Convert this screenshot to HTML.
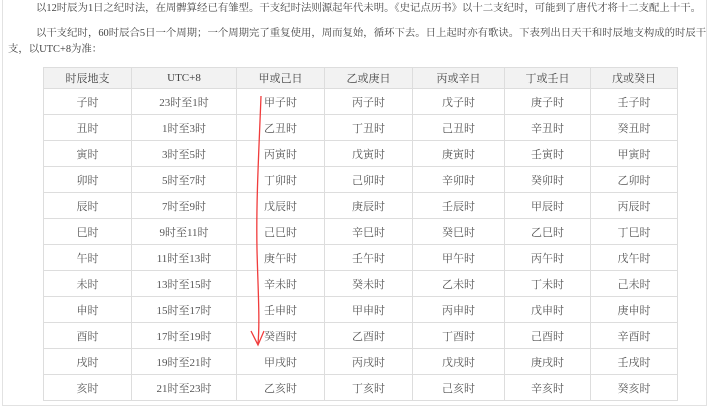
<!DOCTYPE html>
<html><head><meta charset="utf-8"><style>
html,body{margin:0;padding:0;width:712px;height:408px;overflow:hidden;background:#fff;}
body{font-family:"Liberation Serif","Noto Serif CJK SC",serif;color:#444;font-size:11px;position:relative;}
.frame{position:absolute;left:2px;top:-2px;width:703px;height:406px;border:1px solid #e2e2e2;}
p{position:absolute;margin:0;white-space:nowrap;line-height:15px;font-size:10.4px;}
table{position:absolute;left:43px;top:67px;border-collapse:collapse;}
td{border:1px solid #ddd;text-align:center;height:25px;padding:0;color:#555;font-size:11px;}
tr.h td{background:#f2f2f2;height:20px;color:#444;}
</style></head><body>
<div class="frame"></div>
<p style="left:36px;top:1px;">以12时辰为1日之纪时法，在周髀算经已有雏型。干支纪时法则源起年代未明。《史记点历书》以十二支纪时，可能到了唐代才将十二支配上十干。</p>
<p style="left:36px;top:26px;">以干支纪时，60时辰合5日一个周期；一个周期完了重复使用，周而复始，循环下去。日上起时亦有歌诀。下表列出日天干和时辰地支构成的时辰干</p>
<p style="left:8px;top:42px;">支，以UTC+8为准：</p>
<table>
<colgroup><col style="width:88px"><col style="width:105px"><col style="width:88px"><col style="width:88px"><col style="width:92px"><col style="width:86px"><col style="width:87px"></colgroup>
<tr class="h"><td>时辰地支</td><td>UTC+8</td><td>甲或己日</td><td>乙或庚日</td><td>丙或辛日</td><td>丁或壬日</td><td>戊或癸日</td></tr>
<tr><td>子时</td><td>23时至1时</td><td>甲子时</td><td>丙子时</td><td>戊子时</td><td>庚子时</td><td>壬子时</td></tr>
<tr><td>丑时</td><td>1时至3时</td><td>乙丑时</td><td>丁丑时</td><td>己丑时</td><td>辛丑时</td><td>癸丑时</td></tr>
<tr><td>寅时</td><td>3时至5时</td><td>丙寅时</td><td>戊寅时</td><td>庚寅时</td><td>壬寅时</td><td>甲寅时</td></tr>
<tr><td>卯时</td><td>5时至7时</td><td>丁卯时</td><td>己卯时</td><td>辛卯时</td><td>癸卯时</td><td>乙卯时</td></tr>
<tr><td>辰时</td><td>7时至9时</td><td>戊辰时</td><td>庚辰时</td><td>壬辰时</td><td>甲辰时</td><td>丙辰时</td></tr>
<tr><td>巳时</td><td>9时至11时</td><td>己巳时</td><td>辛巳时</td><td>癸巳时</td><td>乙巳时</td><td>丁巳时</td></tr>
<tr><td>午时</td><td>11时至13时</td><td>庚午时</td><td>壬午时</td><td>甲午时</td><td>丙午时</td><td>戊午时</td></tr>
<tr><td>未时</td><td>13时至15时</td><td>辛未时</td><td>癸未时</td><td>乙未时</td><td>丁未时</td><td>己未时</td></tr>
<tr><td>申时</td><td>15时至17时</td><td>壬申时</td><td>甲申时</td><td>丙申时</td><td>戊申时</td><td>庚申时</td></tr>
<tr><td>酉时</td><td>17时至19时</td><td>癸酉时</td><td>乙酉时</td><td>丁酉时</td><td>己酉时</td><td>辛酉时</td></tr>
<tr><td>戌时</td><td>19时至21时</td><td>甲戌时</td><td>丙戌时</td><td>戊戌时</td><td>庚戌时</td><td>壬戌时</td></tr>
<tr><td>亥时</td><td>21时至23时</td><td>乙亥时</td><td>丁亥时</td><td>己亥时</td><td>辛亥时</td><td>癸亥时</td></tr>
</table>
<svg style="position:absolute;left:0;top:0" width="712" height="408">
<path d="M261 96 C259 150 256 200 257 250 C258 290 260 320 258 344" stroke="#f03c3c" stroke-width="1.3" fill="none"/>
<path d="M251 331 L258 345 L264 331" stroke="#f03c3c" stroke-width="1.3" fill="none"/>
</svg>
</body></html>
